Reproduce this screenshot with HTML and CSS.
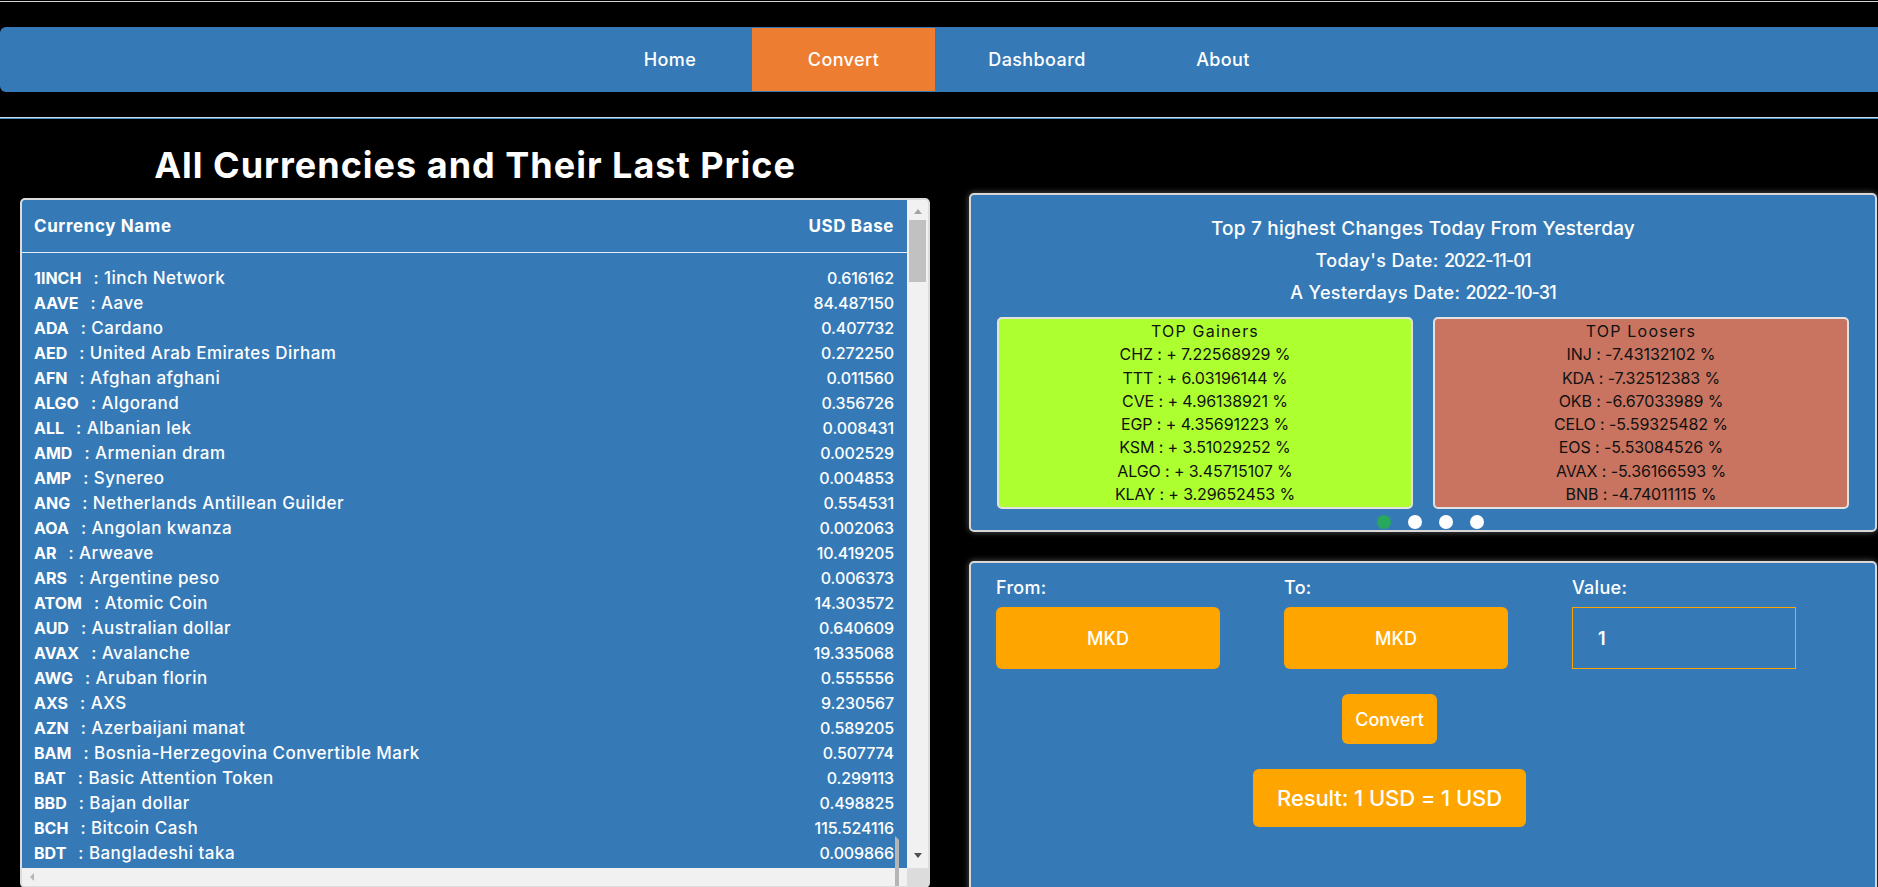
FILE: index.html
```html
<!DOCTYPE html>
<html lang="en">
<head>
<meta charset="utf-8">
<title>Currency Converter</title>
<link rel="stylesheet" href="styles.css">
</head>
<body>
<div class="topline"></div>
<nav class="navbar">
  <ul class="nav-list">
    <li class="nav-item w-home">Home</li>
    <li class="nav-item w-convert active">Convert</li>
    <li class="nav-item w-dash">Dashboard</li>
    <li class="nav-item w-about">About</li>
  </ul>
</nav>
<div class="rule"></div>
<main class="main">
  <section class="left">
    <h1 class="title">All Currencies and Their Last Price</h1>
    <div class="table-box">
      <div class="scroll-row">
        <div class="table-view">
          <div class="thead">
            <span>Currency Name</span>
            <span>USD Base</span>
          </div>
          <div class="tbody">
            <div class="row"><span><b class="code">1INCH</b>: 1inch Network</span><span class="val">0.616162</span></div>
            <div class="row"><span><b class="code">AAVE</b>: Aave</span><span class="val">84.487150</span></div>
            <div class="row"><span><b class="code">ADA</b>: Cardano</span><span class="val">0.407732</span></div>
            <div class="row"><span><b class="code">AED</b>: United Arab Emirates Dirham</span><span class="val">0.272250</span></div>
            <div class="row"><span><b class="code">AFN</b>: Afghan afghani</span><span class="val">0.011560</span></div>
            <div class="row"><span><b class="code">ALGO</b>: Algorand</span><span class="val">0.356726</span></div>
            <div class="row"><span><b class="code">ALL</b>: Albanian lek</span><span class="val">0.008431</span></div>
            <div class="row"><span><b class="code">AMD</b>: Armenian dram</span><span class="val">0.002529</span></div>
            <div class="row"><span><b class="code">AMP</b>: Synereo</span><span class="val">0.004853</span></div>
            <div class="row"><span><b class="code">ANG</b>: Netherlands Antillean Guilder</span><span class="val">0.554531</span></div>
            <div class="row"><span><b class="code">AOA</b>: Angolan kwanza</span><span class="val">0.002063</span></div>
            <div class="row"><span><b class="code">AR</b>: Arweave</span><span class="val">10.419205</span></div>
            <div class="row"><span><b class="code">ARS</b>: Argentine peso</span><span class="val">0.006373</span></div>
            <div class="row"><span><b class="code">ATOM</b>: Atomic Coin</span><span class="val">14.303572</span></div>
            <div class="row"><span><b class="code">AUD</b>: Australian dollar</span><span class="val">0.640609</span></div>
            <div class="row"><span><b class="code">AVAX</b>: Avalanche</span><span class="val">19.335068</span></div>
            <div class="row"><span><b class="code">AWG</b>: Aruban florin</span><span class="val">0.555556</span></div>
            <div class="row"><span><b class="code">AXS</b>: AXS</span><span class="val">9.230567</span></div>
            <div class="row"><span><b class="code">AZN</b>: Azerbaijani manat</span><span class="val">0.589205</span></div>
            <div class="row"><span><b class="code">BAM</b>: Bosnia-Herzegovina Convertible Mark</span><span class="val">0.507774</span></div>
            <div class="row"><span><b class="code">BAT</b>: Basic Attention Token</span><span class="val">0.299113</span></div>
            <div class="row"><span><b class="code">BBD</b>: Bajan dollar</span><span class="val">0.498825</span></div>
            <div class="row"><span><b class="code">BCH</b>: Bitcoin Cash</span><span class="val">115.524116</span></div>
            <div class="row"><span><b class="code">BDT</b>: Bangladeshi taka</span><span class="val">0.009866</span></div>
          </div>
        </div>
        <div class="vbar">
          <span class="arrow up"></span>
          <span class="thumb"></span>
          <span class="track"></span>
          <span class="arrow down"></span>
        </div>
      </div>
      <div class="hbar-row">
        <div class="hbar">
          <span class="arrow left"></span>
          <span class="arrow right"></span>
        </div>
        <div class="corner"></div>
      </div>
    </div>
  </section>

  <section class="right">
    <div class="panel changes">
      <p class="line headline">Top 7 highest Changes Today From Yesterday</p>
      <p class="line">Today's Date: <span class="num">2022-11-01</span></p>
      <p class="line">A Yesterdays Date: <span class="num">2022-10-31</span></p>
      <div class="boxes">
        <div class="box gainers">
          <div class="box-title">TOP Gainers</div>
          <div>CHZ : + 7.22568929 %</div>
          <div>TTT : + 6.03196144 %</div>
          <div>CVE : + 4.96138921 %</div>
          <div>EGP : + 4.35691223 %</div>
          <div>KSM : + 3.51029252 %</div>
          <div>ALGO : + 3.45715107 %</div>
          <div>KLAY : + 3.29652453 %</div>
        </div>
        <div class="box losers">
          <div class="box-title">TOP Loosers</div>
          <div>INJ : -7.43132102 %</div>
          <div>KDA : -7.32512383 %</div>
          <div>OKB : -6.67033989 %</div>
          <div>CELO : -5.59325482 %</div>
          <div>EOS : -5.53084526 %</div>
          <div>AVAX : -5.36166593 %</div>
          <div>BNB : -4.74011115 %</div>
        </div>
      </div>
      <div class="dots">
        <span class="dot on"></span>
        <span class="dot"></span>
        <span class="dot"></span>
        <span class="dot"></span>
      </div>
    </div>

    <div class="panel converter">
      <div class="fields">
        <div class="field">
          <label class="label">From:</label>
          <div class="select">MKD</div>
        </div>
        <div class="field">
          <label class="label">To:</label>
          <div class="select">MKD</div>
        </div>
        <div class="field">
          <label class="label">Value:</label>
          <div class="input">1</div>
        </div>
      </div>
      <div class="actions">
        <button class="btn-convert">Convert</button>
        <div class="result">Result: 1 USD = 1 USD</div>
      </div>
    </div>
  </section>
</main>
</body>
</html>
```

FILE: styles.css
```css
* { box-sizing: border-box; }

html, body {
  margin: 0;
  padding: 0;
  background: #000;
  overflow: hidden;
}

body {
  font-family: "Inter", "Open Sans", sans-serif;
  color: #fff;
  font-weight: 500;
}

.topline {
  margin-top: 1px;
  height: 1px;
  background: #d4d4d4;
}

/* NAV */
.navbar {
  margin-top: 25px;
  height: 65px;
  background: #357ab7;
  border-radius: 6px 0 0 6px;
}

.nav-list {
  list-style: none;
  margin: 0;
  padding: 0 0 0 17px;
  height: 100%;
  display: flex;
  justify-content: center;
  align-items: stretch;
}

.nav-item {
  margin: 1px 0;
  display: flex;
  align-items: center;
  justify-content: center;
  padding-bottom: 1px;
  font-size: 18px;
  letter-spacing: 0.4px;
  color: #fff;
}

.w-home { width: 164px; }
.w-convert { width: 183px; }
.w-dash { width: 204px; }
.w-about { width: 168px; }

.nav-item.active { background: #ed7d31; }

.rule {
  margin-top: 25px;
  height: 2px;
  border-top: 1px solid #c9ddf0;
  border-bottom: 1px solid #4f8cc4;
}

/* MAIN */
.main {
  display: grid;
  grid-template-columns: 910px 908px;
  column-gap: 39px;
  padding-left: 20px;
  align-items: start;
}

.title {
  margin: 25px 0 12px;
  font-size: 36px;
  line-height: 42px;
  font-weight: 700;
  text-align: center;
  letter-spacing: 1px;
}

/* TABLE */
.table-box {
  border: 2px solid #dcdcdc;
  border-radius: 5px;
  overflow: hidden;
  background: #f1f1f1;
  display: flex;
  flex-direction: column;
}

.scroll-row {
  height: 668px;
  display: flex;
}

.table-view {
  flex: 1;
  min-width: 0;
  background: #357ab7;
  overflow: hidden;
}

.thead {
  height: 53px;
  display: flex;
  justify-content: space-between;
  align-items: center;
  padding: 0 13px 1px 12px;
  border-bottom: 1px solid #e6eef7;
  font-size: 17px;
  font-weight: 700;
  letter-spacing: 0.6px;
}

.tbody {
  padding-top: 12px;
}

.row {
  height: 25px;
  display: flex;
  justify-content: space-between;
  align-items: center;
  padding: 0 13px 0 12px;
  font-size: 17px;
  letter-spacing: 0.45px;
  font-weight: 500;
  white-space: nowrap;
}

.code {
  font-size: 16px;
  letter-spacing: 0;
  font-weight: 700;
  margin-right: 12px;
}

.val {
  font-size: 16px;
  letter-spacing: -0.1px;
}

/* fake scrollbars */
.vbar {
  width: 21px;
  background: #f1f1f1;
  display: flex;
  flex-direction: column;
  align-items: center;
}

.thumb {
  margin-top: 6px;
  width: 17px;
  height: 62px;
  background: #c1c1c1;
}

.track { flex: 1; }

.arrow {
  width: 0;
  height: 0;
  display: block;
}

.arrow.up {
  margin-top: 9px;
  border-left: 4px solid transparent;
  border-right: 4px solid transparent;
  border-bottom: 5px solid #a3a3a3;
}

.arrow.down {
  margin-bottom: 10px;
  border-left: 4px solid transparent;
  border-right: 4px solid transparent;
  border-top: 5px solid #505050;
}

.hbar-row {
  height: 18px;
  display: flex;
}

.hbar {
  flex: 1;
  background: #f1f1f1;
  display: flex;
  justify-content: space-between;
  align-items: center;
  padding: 0 8px;
}

.arrow.left {
  border-top: 4px solid transparent;
  border-bottom: 4px solid transparent;
  border-right: 4px solid #b5b5b5;
}

.arrow.right {
  border-top: 4px solid transparent;
  border-bottom: 4px solid transparent;
  border-left: 4px solid #b5b5b5;
}

.corner {
  width: 21px;
  background: #dcdcdc;
}

/* RIGHT */
.right {
  padding-top: 74px;
  display: flex;
  flex-direction: column;
  gap: 29px;
}

.panel {
  background: #357ab7;
  border: 2px solid #d8d8d8;
  border-radius: 5px;
  box-shadow: 0 0 6px rgba(255, 255, 255, 0.35);
}

.changes {
  padding: 18px 26px 1px;
}

.line {
  margin: 0;
  text-align: center;
  font-size: 18px;
  line-height: 32px;
  font-weight: 500;
  letter-spacing: 0.4px;
}

.line.headline {
  font-size: 19px;
  letter-spacing: 0.2px;
}

.num {
  letter-spacing: -0.9px;
}

.boxes {
  margin-top: 8px;
  display: grid;
  grid-template-columns: 416px 416px;
  column-gap: 20px;
}

.box {
  height: 192px;
  border: 2px solid #e2e2e2;
  border-radius: 5px;
  padding-top: 1px;
  text-align: center;
  color: #111;
  font-size: 16px;
  letter-spacing: -0.1px;
  line-height: 23.3px;
  font-weight: 400;
}

.box-title {
  letter-spacing: 1.2px;
}

.gainers { background: #adff2f; }
.losers { background: #c87460; }

.dots {
  margin-top: 6px;
  height: 14px;
  display: flex;
  justify-content: center;
  gap: 17px;
  padding-left: 15px;
}

.dot {
  width: 14px;
  height: 14px;
  border-radius: 50%;
  background: #fff;
}

.dot.on { background: #27a85c; }

.converter {
  padding: 13px 25px 80px;
}

.fields {
  display: grid;
  grid-template-columns: 224px 224px 224px;
  column-gap: 64px;
}

.label {
  display: block;
  font-size: 18px;
  line-height: 24px;
  font-weight: 500;
  letter-spacing: 0.3px;
}

.select {
  margin-top: 7px;
  height: 62px;
  background: #ffa500;
  border-radius: 6px;
  display: flex;
  align-items: center;
  justify-content: center;
  font-size: 18px;
  font-weight: 500;
}

.input {
  margin-top: 7px;
  height: 62px;
  border: 1px solid #ffa500;
  display: flex;
  align-items: center;
  padding-left: 25px;
  font-size: 18px;
  font-weight: 600;
}

.actions {
  width: 787px;
  display: flex;
  flex-direction: column;
  align-items: center;
}

.btn-convert {
  margin-top: 25px;
  width: 95px;
  height: 50px;
  border: 0;
  border-radius: 6px;
  background: #ffa500;
  color: #fff;
  font-family: inherit;
  font-size: 18px;
  font-weight: 500;
  padding: 0;
}

.result {
  margin-top: 25px;
  width: 273px;
  height: 58px;
  border-radius: 6px;
  background: #ffa500;
  display: flex;
  align-items: center;
  justify-content: center;
  font-size: 22px;
  font-weight: 500;
  letter-spacing: -0.1px;
}
```
